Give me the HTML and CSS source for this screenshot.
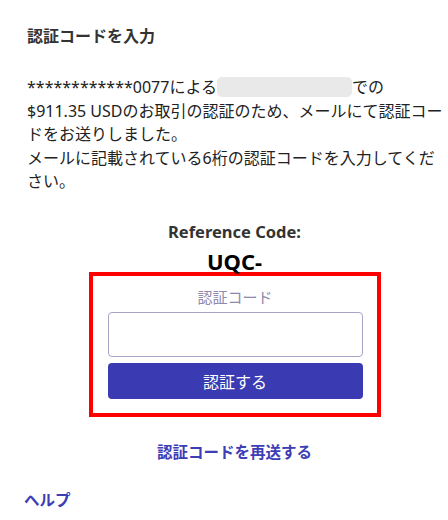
FILE: index.html
```html
<!DOCTYPE html>
<html lang="ja">
<head>
    <meta charset="UTF-8">
    <meta name="viewport" content="width=device-width, initial-scale=1.0">
    <title>認証コードを入力</title>
    <link rel="stylesheet" href="styles.css">
</head>
<body>
    <div class="page">
        <h1 class="page-title">認証コードを入力</h1>
        <p class="message">
            ************0077による<span class="merchant"></span>での<br>$911.35 USDのお取引の認証のため、メールにて認証コードをお送りしました。<br>メールに記載されている6桁の認証コードを入力してください。
        </p>

        <div class="reference">
            <div class="reference-label">Reference Code:</div>
            <div class="reference-value">UQC-</div>
        </div>

        <form class="otp-box" onsubmit="return false;">
            <label class="otp-label" for="otp">認証コード</label>
            <input class="otp-input" id="otp" type="text" inputmode="numeric" maxlength="6">
            <button class="otp-submit" type="submit">認証する</button>
        </form>

        <div class="resend">
            <a class="link" href="#">認証コードを再送する</a>
        </div>

        <a class="link help" href="#">ヘルプ</a>
    </div>
</body>
</html>
```

FILE: styles.css
```css
body {
    margin: 0;
    background: #fff;
    font-family: 'Noto Sans', 'Noto Sans CJK JP', sans-serif;
    color: #222;
}
.page {
    padding: 24px 6px 0 27px;
}
.page-title {
    margin: 0;
    font-size: 16px;
    line-height: 24px;
    font-weight: 700;
    color: #333;
}
.message {
    margin: 28px -3px 0 0;
    font-size: 16px;
    line-height: 23.5px;
    color: #222;
}
.merchant {
    display: inline-block;
    width: 135px;
    height: 20px;
    vertical-align: -4px;
    background: #e9e9e9;
    border-radius: 5px;
}
.reference {
    margin-top: 28px;
    text-align: center;
}
.reference-label {
    font-size: 16.5px;
    line-height: 20px;
    font-weight: 700;
    color: #333;
}
.reference-value {
    margin-top: 8px;
    font-size: 22px;
    line-height: 22px;
    font-weight: 700;
    color: #000;
}
.otp-box {
    box-sizing: border-box;
    width: 292px;
    margin: 0 auto;
    padding: 11px 14px 14px 15px;
    border: 4px solid #ff0000;
    display: flex;
    flex-direction: column;
}
.otp-label {
    text-align: center;
    font-size: 15px;
    line-height: 20px;
    color: #8e89ad;
}
.otp-input {
    box-sizing: border-box;
    height: 45px;
    margin-top: 5px;
    border: 1.5px solid #a8a4c6;
    border-radius: 4px;
    font-size: 16px;
    padding: 0 10px;
    outline: none;
}
.otp-submit {
    height: 36px;
    margin-top: 6px;
    border: none;
    border-radius: 4px;
    background: #3a3ab2;
    color: #fff;
    font-family: inherit;
    font-size: 16px;
    cursor: pointer;
}
.resend {
    margin-top: 24px;
    text-align: center;
    line-height: 22px;
}
.link {
    color: #3d3db5;
    font-size: 15.5px;
    font-weight: 700;
    text-decoration: none;
}
.help {
    display: inline-block;
    margin: 26px 0 0 -3px;
    line-height: 22px;
}
```
